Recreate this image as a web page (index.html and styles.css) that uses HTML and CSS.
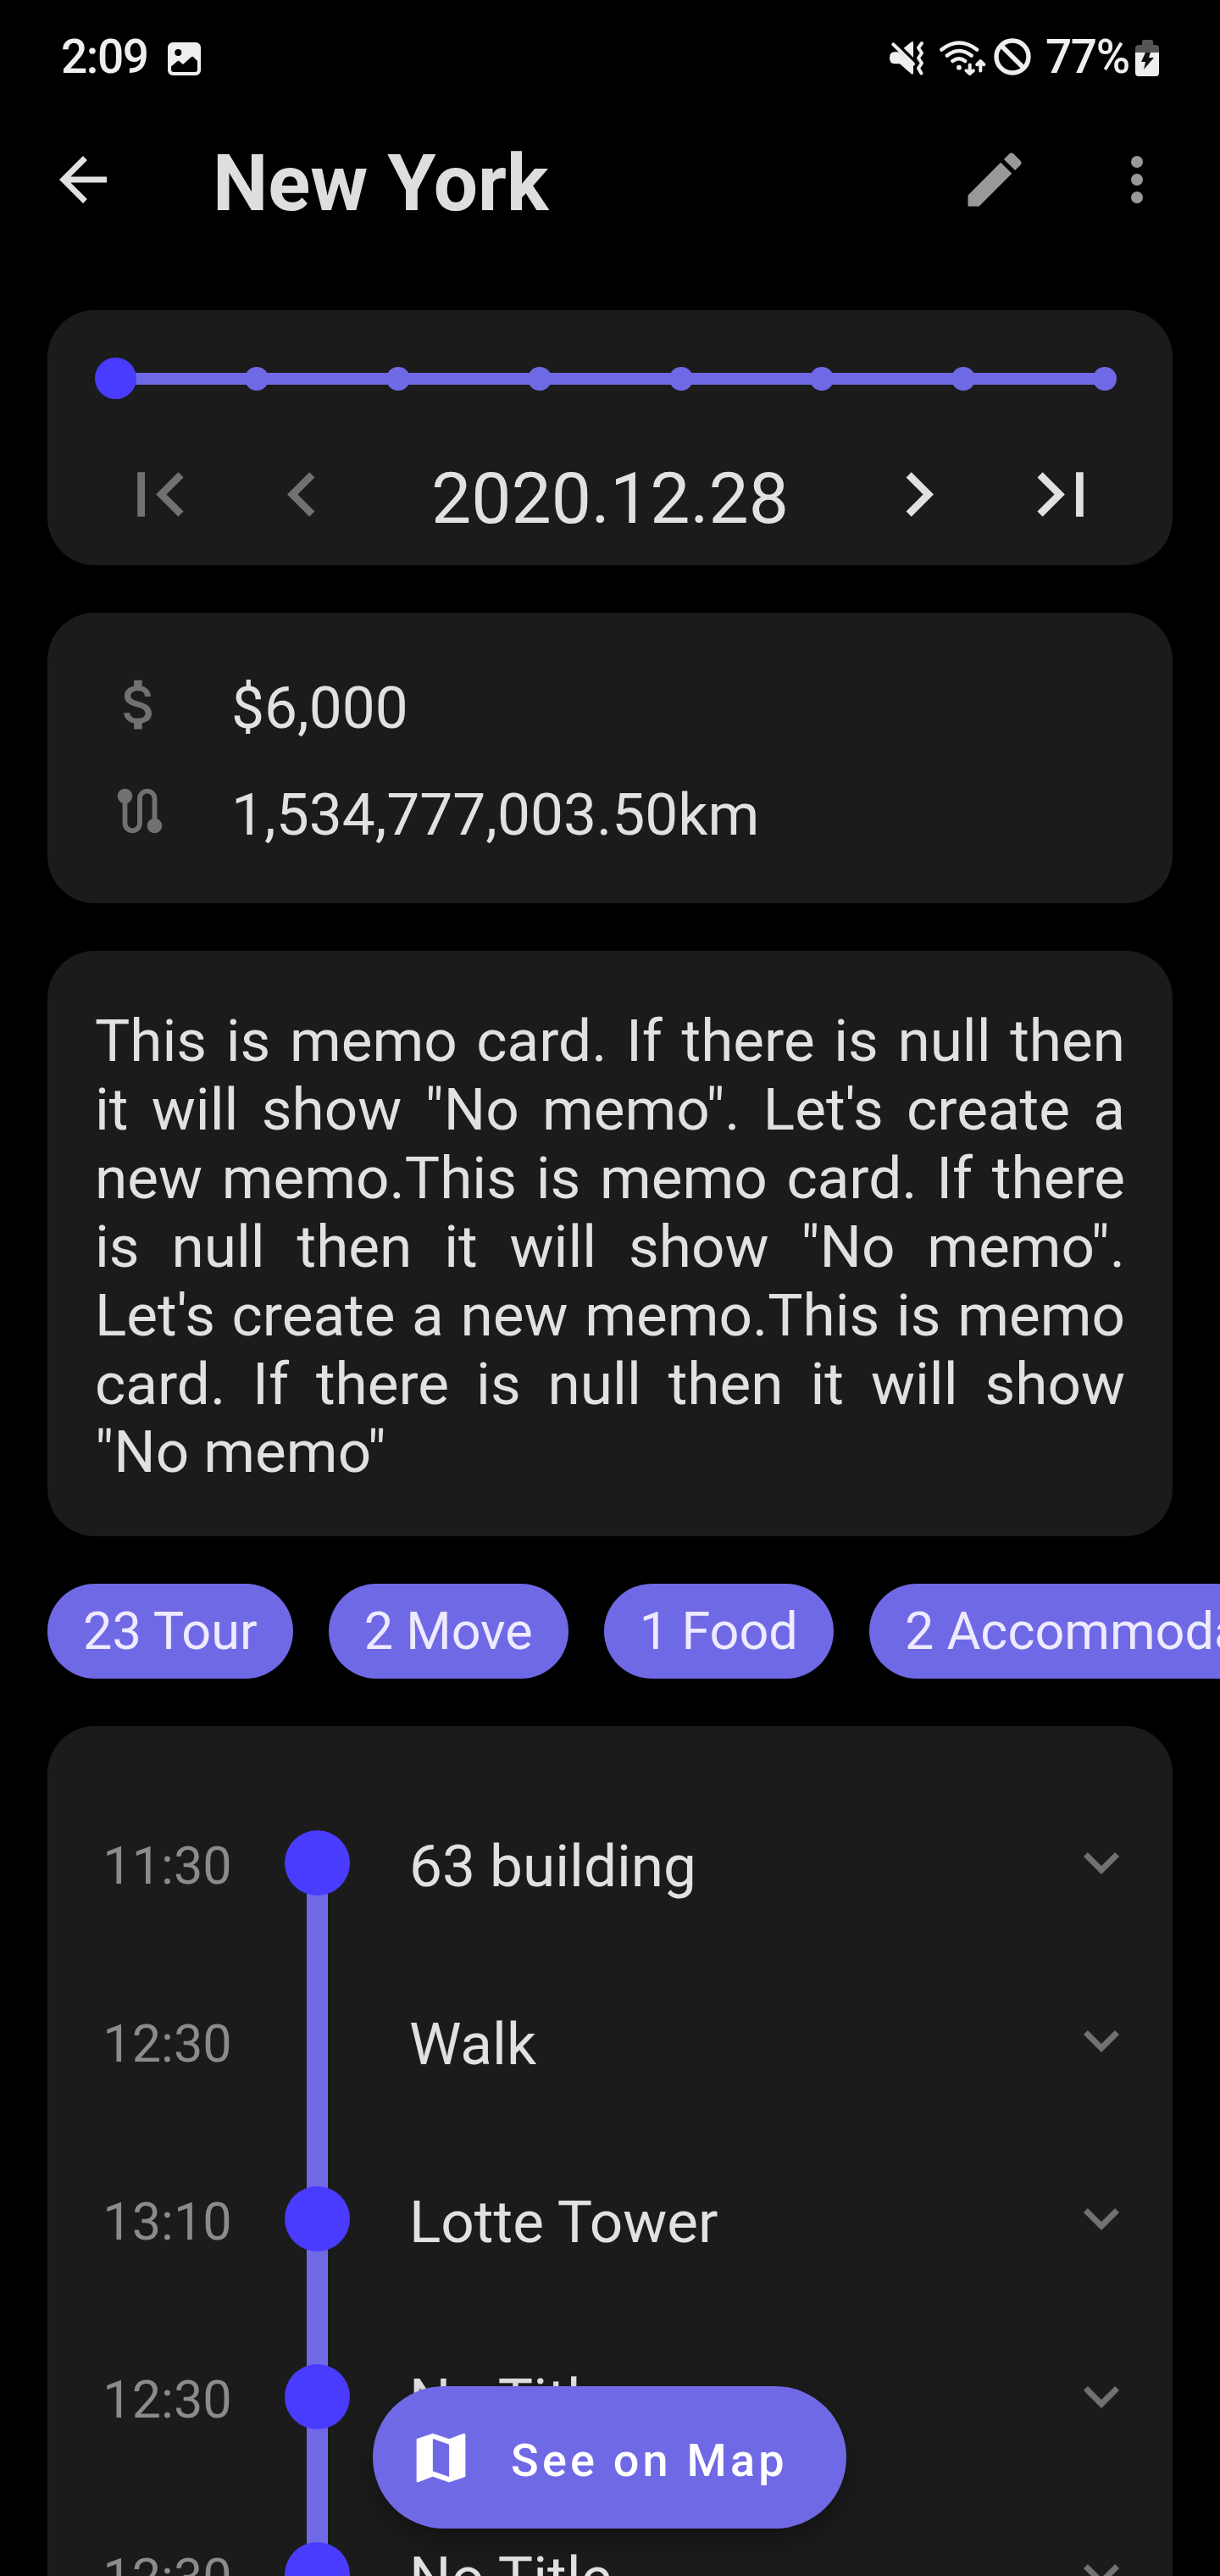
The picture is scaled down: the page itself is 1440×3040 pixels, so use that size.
FILE: index.html
```html
<!DOCTYPE html>
<html lang="en">
<head>
<meta charset="utf-8">
<title>New York</title>
<link rel="stylesheet" href="styles.css">
</head>
<body>
<div class="screen">
  <div class="status">
    <span class="clock">2:09</span>
    <svg class="shot" viewBox="0 0 39 39"><path fill-rule="evenodd" d="M6 0h27a6 6 0 0 1 6 6v27a6 6 0 0 1-6 6H6a6 6 0 0 1-6-6V6a6 6 0 0 1 6-6zM12.300 8a4 4 0 1 0 0 8 4 4 0 0 0 0-8zM4 28.500V32q0 3 3 3h25q3 0 3-3V22l-4.500-4.500q-1.500-1.500-3 0L18 26l-4-3.500q-1.500-1.500-3 0z"/></svg>
    <svg class="signals" viewBox="0 0 170 50">
      <path d="M10.500 16.300 28 32.500V41q0 2.500-2 1.500L12 30.300H6q-6 0-6-7t6-7z"/>
      <path d="M16.700 11.700 26 4.200q2-1.500 2 1V23z"/>
      <g class="line"><path d="M4.300 7.300 28 30.500"/><path d="M38 6l-4 5.500 4 6-4 6 4 6-4 6 3.500 6"/>
      <path class="wifi" d="M61.500 13.500q20.500-16 41.500 0M68 20.500q14-11 28.500 0M74.500 27q7.500-5.500 14.500 0"/>
      <path d="M94.700 31.500V42M90.500 38.300l4.200 3.700 4.200-3.700M107.300 38.500V27.500M103.200 31.200l4.100-4 4.100 4"/></g>
      <circle cx="82" cy="34.700" r="2.900"/>
      <g class="ban"><circle cx="145" cy="22" r="19"/><path d="M132 9 158 35"/></g>
    </svg>
    <span class="percent">77%</span>
    <svg class="battery" viewBox="0 0 28 43"><path class="dim" d="M8 2q0-2 2-2h9q2 0 2 2v4h3q4 0 4 4v6H0v-6q0-4 4-4h4z"/><path d="M0 15h28v24q0 4-4 4H4q-4 0-4-4z"/><path class="bolt" d="M12 15h6l-2 6h6L10 35l2-9H7z"/></svg>
  </div>

  <header class="appbar">
    <span class="button light"><svg class="icon" viewBox="0 0 24 24"><path d="M20 11H7.830l5.590-5.590L12 4l-8 8 8 8 1.410-1.410L7.830 13H20v-2z"/></svg></span>
    <h1 class="title">New York</h1>
    <span class="button"><svg class="icon" viewBox="0 0 24 24"><path d="M3 17.250V21h3.750L17.810 9.940l-3.750-3.750L3 17.250zM20.710 7.040c.390-.390.390-1.020 0-1.410l-2.340-2.340c-.390-.390-1.020-.390-1.410 0l-1.830 1.830 3.750 3.750 1.830-1.830z"/></svg></span>
    <span class="button"><svg class="icon" viewBox="0 0 24 24"><circle cx="12" cy="6" r="2"/><circle cx="12" cy="12" r="2"/><circle cx="12" cy="18" r="2"/></svg></span>
  </header>

  <main class="content">
    <section class="card date-card">
      <div class="track"><i class="stop current"></i><i class="stop"></i><i class="stop"></i><i class="stop"></i><i class="stop"></i><i class="stop"></i><i class="stop"></i><i class="stop"></i></div>
      <div class="pager">
        <span class="button off"><svg class="icon big" viewBox="0 0 24 24"><path d="M18.410 16.590L13.820 12l4.590-4.590L17 6l-6 6 6 6zM6 6h2v12H6z"/></svg></span>
        <span class="button off"><svg class="icon big" viewBox="0 0 24 24"><path d="M15.410 7.410L14 6l-6 6 6 6 1.410-1.410L10.830 12z"/></svg></span>
        <span class="date">2020.12.28</span>
        <span class="button light"><svg class="icon big" viewBox="0 0 24 24"><path d="M10 6L8.590 7.410 13.170 12l-4.580 4.590L10 18l6-6z"/></svg></span>
        <span class="button light"><svg class="icon big" viewBox="0 0 24 24"><path d="M5.590 7.410L10.180 12l-4.590 4.590L7 18l6-6-6-6zM16 6h2v12h-2z"/></svg></span>
      </div>
    </section>

    <section class="card facts">
      <div class="fact"><span class="fact-icon"><svg class="icon money" viewBox="0 0 24 24"><path d="M11.800 10.900c-2.270-.590-3-1.200-3-2.150 0-1.090 1.010-1.850 2.700-1.850 1.780 0 2.440.850 2.500 2.100h2.210c-.070-1.720-1.120-3.300-3.210-3.810V3h-3v2.160c-1.940.420-3.500 1.680-3.500 3.610 0 2.310 1.910 3.460 4.700 4.130 2.500.600 3 1.480 3 2.410 0 .690-.490 1.790-2.700 1.790-2.060 0-2.870-.920-2.980-2.100h-2.200c.120 2.190 1.760 3.420 3.680 3.830V21h3v-2.150c1.950-.370 3.500-1.500 3.500-3.550 0-2.840-2.430-3.810-4.700-4.400z"/></svg></span><span class="fact-text">$6,000</span></div>
      <div class="fact"><span class="fact-icon"><svg class="icon route" viewBox="0 0 24 24"><path d="M19 15.180V7c0-2.210-1.790-4-4-4s-4 1.790-4 4v10c0 1.100-.900 2-2 2s-2-.900-2-2V8.820C8.160 8.400 9 7.300 9 6c0-1.660-1.340-3-3-3S3 4.340 3 6c0 1.300.840 2.400 2 2.820V17c0 2.210 1.790 4 4 4s4-1.790 4-4V7c0-1.100.900-2 2-2s2 .900 2 2v8.180c-1.160.410-2 1.510-2 2.820 0 1.660 1.340 3 3 3s3-1.340 3-3c0-1.310-.840-2.400-2-2.820z"/></svg></span><span class="fact-text">1,534,777,003.50km</span></div>
    </section>

    <section class="card memo">This is memo card. If there is null then it will show "No memo". Let's create a new memo.This is memo card. If there is null then it will show "No memo". Let's create a new memo.This is memo card. If there is null then it will show "No memo"</section>

    <div class="chips"><span class="chip">23 Tour</span><span class="chip">2 Move</span><span class="chip">1 Food</span><span class="chip">2 Accommodation</span></div>

    <section class="card plan">
      <div class="row first"><span class="time">11:30</span><span class="rail"><i class="dot"></i></span><span class="name">63 building</span><svg class="icon more" viewBox="0 0 24 24"><path d="M16.590 8.590L12 13.170 7.410 8.590 6 10l6 6 6-6z"/></svg></div>
      <div class="row"><span class="time">12:30</span><span class="rail"></span><span class="name">Walk</span><svg class="icon more" viewBox="0 0 24 24"><path d="M16.590 8.590L12 13.170 7.410 8.590 6 10l6 6 6-6z"/></svg></div>
      <div class="row"><span class="time">13:10</span><span class="rail"><i class="dot"></i></span><span class="name">Lotte Tower</span><svg class="icon more" viewBox="0 0 24 24"><path d="M16.590 8.590L12 13.170 7.410 8.590 6 10l6 6 6-6z"/></svg></div>
      <div class="row"><span class="time">12:30</span><span class="rail"><i class="dot"></i></span><span class="name">No Title</span><svg class="icon more" viewBox="0 0 24 24"><path d="M16.590 8.590L12 13.170 7.410 8.590 6 10l6 6 6-6z"/></svg></div>
      <div class="row"><span class="time">12:30</span><span class="rail"><i class="dot"></i></span><span class="name">No Title</span><svg class="icon more" viewBox="0 0 24 24"><path d="M16.590 8.590L12 13.170 7.410 8.590 6 10l6 6 6-6z"/></svg></div>
    </section>
  </main>

  <div class="fab"><svg class="icon map" viewBox="0 0 24 24"><path d="M20.500 3l-.160.030L15 5.100 9 3 3.360 4.900c-.210.070-.360.250-.360.480V20.500c0 .280.220.500.500.500l.160-.030L9 18.900l6 2.100 5.640-1.900c.210-.070.360-.250.360-.480V3.500c0-.280-.220-.500-.500-.500zM15 19l-6-2.110V5l6 2.110V19z"/></svg><span class="fab-label">See on Map</span></div>
</div>
</body>
</html>
```
FILE: styles.css
```css
* { box-sizing: border-box; }
body { margin: 0; background: #000; }
svg { display: block; flex: none; fill: currentColor; }

.screen {
  position: relative;
  width: 1440px;
  height: 3040px;
  overflow: hidden;
  background: #000;
  color: #e1e1e1;
  font-family: Roboto, sans-serif;
}

/* System status bar */
.status { display: flex; height: 114px; padding: 0 70px 0 72px; color: #eee; font-size: 55px; font-weight: 500; line-height: 64px; }
.clock { width: 126px; padding-top: 35px; letter-spacing: -1.400px; white-space: nowrap; }
.shot { width: 39px; height: 39px; margin-top: 50px; }
.signals { width: 170px; height: 50px; margin: 45px 0 0 auto; }
.signals .line, .signals .ban { fill: none; stroke: currentColor; stroke-width: 4; stroke-linecap: round; stroke-linejoin: round; }
.signals .wifi { stroke-width: 4.600; }
.signals .ban { stroke-width: 5.400; }
.percent { width: 104px; margin-left: 14px; padding-top: 35px; letter-spacing: -1.400px; white-space: nowrap; }
.battery { width: 28px; height: 43px; margin: 47px 2px 0 2px; }
.battery .dim { fill: #555; }
.battery .bolt { fill: #111; }

/* App bar */
.appbar { display: flex; align-items: center; height: 196px; padding: 0 14px; color: #999; }
.button { display: flex; flex: none; align-items: center; justify-content: center; width: 168px; height: 168px; }
.icon { width: 84px; height: 84px; }
.icon.big { width: 105px; height: 105px; }
.light { color: #e1e1e1; }
.off { color: #717171; }
.title { flex: 1; margin: 10px 0 0 69px; color: #dedede; font-size: 92.600px; font-weight: 700; line-height: 108px; }

.content { display: flex; flex-direction: column; gap: 56px; padding: 56px 56px 0; }
.card { border-radius: 56px; background: #1b1b1b; }

/* Day selector */
.date-card { height: 301px; padding: 56px 48px 0; }
.track {
  display: flex;
  align-items: center;
  justify-content: space-between;
  height: 49px;
  margin: 0 18px 28px 8px;
  background: linear-gradient(#7069e5, #7069e5) center / calc(100% - 24px) 14px no-repeat;
}
.stop { width: 28px; height: 28px; border-radius: 50%; background: #7069e5; }
.stop.current { width: 49px; height: 49px; margin-right: -10.500px; background: #493cff; }
.pager { display: flex; align-items: center; height: 168px; }
.date { flex: 1; padding-top: 11px; font-size: 84px; line-height: 98px; text-align: center; }

/* Budget and distance */
.facts { height: 343px; padding: 45px 56px; font-size: 69.400px; line-height: 82px; }
.fact { display: flex; align-items: center; height: 126px; }
.fact-icon { display: flex; justify-content: center; width: 105px; margin-right: 56px; color: #717171; }
.fact-text { padding-top: 9px; }
.icon.money { width: 77px; height: 77px; }
.icon.route { width: 70px; height: 70px; }

.memo { height: 691px; padding: 67px 56px 0; font-size: 69.300px; line-height: 80.900px; text-align: justify; }

.chips { display: flex; gap: 42px; height: 112px; margin-right: -56px; overflow: hidden; }
.chip { flex: none; padding: 0 42px; border-radius: 56px; background: #7069e5; color: #eeeaff; font-size: 61.200px; line-height: 112px; white-space: nowrap; }

/* Itinerary */
.plan { height: 1110px; padding: 56px 42px 0 56px; }
.row { display: flex; align-items: center; height: 210px; }
.time { width: 171px; padding-top: 8px; color: #8b8b8b; font-size: 61.200px; line-height: 74px; text-align: center; }
.rail {
  display: flex;
  align-items: center;
  justify-content: center;
  width: 77px;
  height: 210px;
  margin-left: 53px;
  background: linear-gradient(#7069e5, #7069e5) center / 25px 100% no-repeat;
}
.first .rail { background-position: center bottom; background-size: 25px 50%; }
.dot { width: 77px; height: 77px; border-radius: 50%; background: #493cff; }
.name { flex: 1; margin-left: 70px; padding-top: 9px; font-size: 69.300px; line-height: 82px; }
.icon.more { color: #717171; }

/* Floating button over the itinerary */
.fab {
  position: absolute;
  left: 440px;
  top: 2816px;
  display: flex;
  align-items: center;
  width: 559px;
  height: 168px;
  padding-left: 42px;
  border-radius: 84px;
  background: #7069e5;
  color: #fff;
  box-shadow: 0 14px 28px rgba(0, 0, 0, .3);
}
.icon.map { width: 77px; height: 77px; }
.fab-label { margin-left: 44px; padding-top: 7px; font-size: 54px; font-weight: 500; letter-spacing: 4.200px; line-height: 64px; white-space: nowrap; }
```
